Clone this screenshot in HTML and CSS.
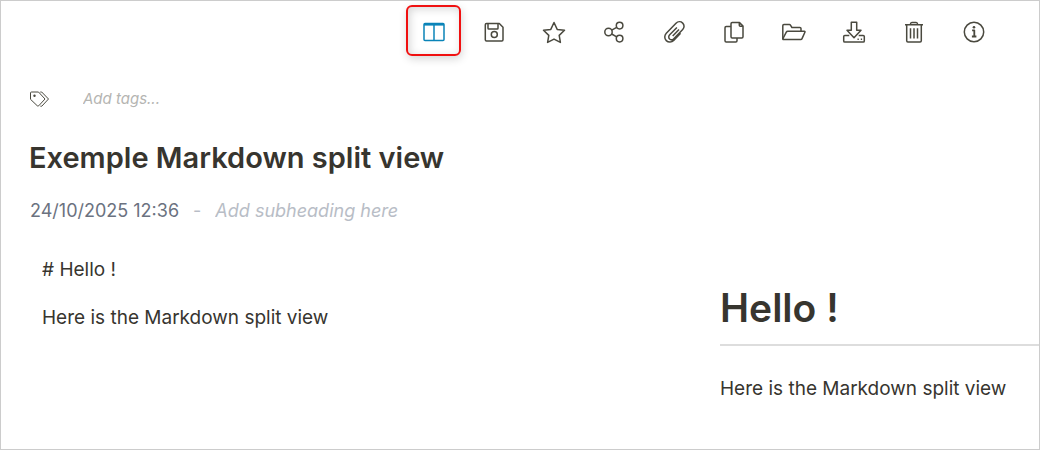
FILE: index.html
```html
<!DOCTYPE html>
<html lang="en">
<head>
<meta charset="utf-8">
<meta name="viewport" content="width=device-width, initial-scale=1">
<title>Exemple Markdown split view</title>
<link rel="stylesheet" href="styles.css">
</head>
<body>
<main class="note">
  <div class="toolbar" role="toolbar" aria-label="Note actions">
    <button class="tool tool-active" type="button" aria-label="Split view" aria-pressed="true">
      <svg class="icon" viewBox="0 0 24 24"><rect x="2" y="3.600" width="20" height="17" rx="1"/><path d="M2 4.600h20" stroke-width="2"/><path d="M12 5v15.500"/></svg>
    </button>
    <button class="tool" type="button" aria-label="Save">
      <svg class="icon" viewBox="0 0 24 24"><path d="M4.500 3.500h12.800l3.700 3.700v12.600q0 1.200-1.200 1.200h-15.300q-1.200 0-1.200-1.200v-15.100q0-1.200 1.200-1.200z"/><path d="M6 3.700v4.500q0 .8.800.8h8.400q.8 0 .8-.8v-4.500"/><circle cx="12.300" cy="14.600" r="3"/></svg>
    </button>
    <button class="tool" type="button" aria-label="Add to favourites">
      <svg class="icon" viewBox="0 0 24 24"><path d="M12 2.500l3.200 6.900 7.300.9-5.300 5.100 1.200 7-6.400-3.300-6.400 3.300 1.200-7-5.300-5.100 7.300-.9z"/></svg>
    </button>
    <button class="tool" type="button" aria-label="Share">
      <svg class="icon" viewBox="0 0 24 24"><circle cx="6.500" cy="12" r="3.700"/><circle cx="17.600" cy="5.600" r="3.300"/><circle cx="17.600" cy="18.600" r="3.300"/><path d="M9.700 10.100l5-2.800M9.700 14l5 2.900"/></svg>
    </button>
    <button class="tool" type="button" aria-label="Attach a file">
      <svg class="icon" viewBox="0 0 24 24"><path d="M18.600 13.300l-6.900 7.100c-2 2-5.300 2.200-7.400.2s-2-5.200 0-7.300l9.700-10c1.900-1.900 4.900-1.900 6.700-.2s1.800 4.500 0 6.400l-8.900 9.200c-1.300 1.300-3.100 1.300-4.200.3s-1.200-2.900.1-4.200l7.200-7.400"/><path d="M17 9.500l-6.300 6.500"/></svg>
    </button>
    <button class="tool" type="button" aria-label="Duplicate">
      <svg class="icon" viewBox="0 0 24 24"><path d="M10.200 2.600h7.300l3.500 3.500v10.600q0 1.200-1.200 1.200h-9.600q-1.200 0-1.200-1.200v-12.900q0-1.200 1.200-1.200z"/><path d="M17.300 2.700v2.600q0 1 1 1h2.600"/><path d="M8.900 6.500h-4.700q-1.200 0-1.200 1.200v13q0 1.200 1.200 1.200h9.600q1.200 0 1.200-1.200v-2.700"/></svg>
    </button>
    <button class="tool" type="button" aria-label="Move to notebook">
      <svg class="icon" viewBox="0 0 24 24"><path d="M.8 19.200v-13.500q0-1.100 1.100-1.100h5.500q.7 0 1.200.8l1.300 2.100h8q1.100 0 1.100 1.100v2.600"/><path d="M5.700 11.300h16.700q.9 0 .5.900l-3 6.700q-.3.700-1.100.7h-17.100q-1.200 0-.7-1.100l3.300-6.400q.4-.8 1.400-.8z"/></svg>
    </button>
    <button class="tool" type="button" aria-label="Download">
      <svg class="icon" viewBox="0 0 24 24"><path d="M9.300 2.300h5.400v7.900h4.300l-7 7.600-7-7.600h4.300z"/><path d="M7.300 15.500h-4.500q-1.100 0-1.100 1.100v4.400q0 1.100 1.100 1.100h18.400q1.100 0 1.100-1.100v-4.400q0-1.100-1.100-1.100h-4.500"/><path d="M15.500 19.300h1.300M18.800 19.300h1.300"/></svg>
    </button>
    <button class="tool" type="button" aria-label="Delete">
      <svg class="icon" viewBox="0 0 24 24"><path d="M3 4.800h18M8.300 4.500q.2-2.100 1.600-2.100h4.200q1.400 0 1.600 2.100"/><path d="M4.700 5v15.800q0 1.200 1.200 1.200h12.200q1.200 0 1.200-1.200v-15.800"/><path d="M8.500 8.300v10.200M12 8.300v10.200M15.500 8.300v10.200"/></svg>
    </button>
    <button class="tool" type="button" aria-label="Information">
      <svg class="icon" viewBox="0 0 24 24"><circle cx="12" cy="12" r="9.700"/><path d="M10.100 10.300h2.200v5.900M9.900 16.500h4.500" stroke-width="1.800"/><circle class="dot" cx="12" cy="7.300" r="1.300"/></svg>
    </button>
  </div>
  <label class="tags">
    <svg class="tag-icon" viewBox="0 0 24 20" role="img" aria-label="Tags"><path d="M2.500 3h7l6.500 7-6.300 6.800q-.7.600-1.400 0l-6.800-6.500v-6.300q0-1 1-1z"/><circle class="dot" cx="5.500" cy="6.800" r="1.200"/><path d="M11.300 3h1.400l6.800 7-6.700 7.200h-1.400"/></svg>
    <input class="field tags-field" type="text" placeholder="Add tags...">
  </label>
  <h1 class="title">Exemple Markdown split view</h1>
  <div class="meta">
    <time datetime="2025-10-24T12:36">24/10/2025 12:36</time>
    <span class="dash">-</span>
    <input class="field sub-field" type="text" placeholder="Add subheading here" aria-label="Subheading">
  </div>
  <div class="split">
    <textarea class="field editor" aria-label="Note content" spellcheck="false"># Hello !

Here is the Markdown split view</textarea>
    <article class="preview">
      <h2 class="preview-heading">Hello !</h2>
      <p class="preview-text">Here is the Markdown split view</p>
    </article>
  </div>
</main>
</body>
</html>
```
FILE: styles.css
```css
* {
  box-sizing: border-box;
}

body {
  margin: 0;
  background: #fff;
  color: #37352f;
  font-family: Inter, "Liberation Sans", sans-serif;
  font-size: 19px;
  line-height: 24px;
}

.note {
  display: flex;
  flex-direction: column;
  min-height: 100vh;
  border: 1px solid #ccc;
}

.toolbar {
  display: flex;
  justify-content: flex-end;
  gap: 5px;
  padding: 4px 38px 0 0;
}

.tool {
  display: grid;
  place-items: center;
  width: 55px;
  height: 51px;
  padding: 3px 0 0;
  border: 2px solid transparent;
  border-radius: 6px;
  background: none;
  color: #4a493f;
}

.tool-active {
  border-color: #f01010;
  box-shadow: 1px 3px 8px rgba(0, 0, 0, 0.16), inset 2px 2px 8px rgba(0, 0, 0, 0.16);
  color: #0a84b8;
}

.icon,
.tag-icon {
  width: 24px;
  height: 24px;
  fill: none;
  stroke: currentColor;
  stroke-width: 1.5;
  stroke-linejoin: round;
}

.dot {
  fill: currentColor;
  stroke: none;
}

.tags {
  display: flex;
  align-items: center;
  gap: 30px;
  padding: 31px 28px 0;
}

.tag-icon {
  height: 20px;
  color: #4a493f;
  stroke-width: 1;
}

.field {
  flex: 1;
  min-width: 0;
  padding: 0;
  border: 0;
  outline: 0;
  background: none;
  color: inherit;
  font: inherit;
}

.field::placeholder {
  font-style: italic;
  opacity: 1;
}

.tags-field {
  font-size: 15px;
}

.tags-field::placeholder {
  color: #b5b5b2;
}

.title {
  margin: 0;
  padding: 27px 28px 0;
  font-size: 29px;
  font-weight: 600;
  line-height: 40px;
}

.meta {
  display: flex;
  align-items: center;
  gap: 14px;
  padding: 21px 29px 0;
  color: #6b7280;
  font-size: 18px;
}

.dash,
.sub-field::placeholder {
  color: #b8bdc6;
}

.split {
  display: grid;
  flex: 1;
  grid-template-columns: 2fr 1fr;
  gap: 40px;
  padding: 35px 0 0 41px;
}

.editor {
  resize: none;
}

.preview {
  padding-top: 23px;
}

.preview-heading {
  margin: 0;
  padding-bottom: 9px;
  border-bottom: 2px solid #ddd;
  font-size: 39px;
  font-weight: 600;
  line-height: 54px;
}

.preview-text {
  margin: 31px 0 0;
}
```
